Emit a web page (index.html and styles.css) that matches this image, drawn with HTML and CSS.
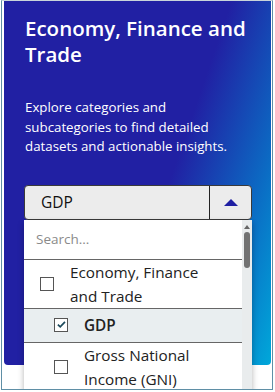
FILE: index.html
```html
<!DOCTYPE html>
<html>
<head>
<meta charset="utf-8">
<link rel="stylesheet" href="styles.css">
</head>
<body>
<div class="frame">
  <div class="card">
    <h1 class="title">Economy, Finance and Trade</h1>
    <p class="desc">Explore categories and subcategories to find detailed datasets and actionable insights.</p>
    <div class="select">
      <div class="select-box">
        <span class="select-value">GDP</span>
        <span class="select-toggle"><span class="tri"></span></span>
      </div>
      <div class="menu">
        <div class="menu-list">
          <div class="search">Search...</div>
          <div class="item">
            <span class="cb"></span>
            <span class="label">Economy, Finance and Trade</span>
          </div>
          <div class="item sub active">
            <span class="cb checked"><svg viewBox="0 0 13 13" width="11" height="11"><path d="M2.2 6.6 L5 9.3 L10.6 3.4" fill="none" stroke="#1b4a5c" stroke-width="2"/></svg></span>
            <span class="label bold">GDP</span>
          </div>
          <div class="item sub">
            <span class="cb"></span>
            <span class="label">Gross National Income (GNI)</span>
          </div>
        </div>
        <div class="scrollbar">
          <span class="sb-arrow"></span>
          <span class="sb-thumb"></span>
        </div>
      </div>
    </div>
  </div>
</div>
</body>
</html>
```
FILE: styles.css
```css
* { box-sizing: border-box; }
html, body { margin: 0; padding: 0; background: #fff; }
body { width: 275px; height: 392px; overflow: hidden; font-family: "Open Sans", "Lato", sans-serif; }
.frame {
  margin-left: 1px;
  width: 272px;
  height: 390px;
  border: 1px solid #5f8fa6;
  border-top-color: #c9d4da;
  padding: 0 1px 0 2px;
  overflow: hidden;
  position: relative;
}
.card {
  height: 364px;
  border-radius: 0 0 4px 4px;
  background: linear-gradient(109deg, #2120a3 0%, #2120a3 58%, #0b6cc4 82%, #00a8da 100%);
  padding: 14px 6px 0 21px;
  color: #fff;
}
.title {
  margin: 0;
  font-size: 20.5px;
  line-height: 26px;
  font-weight: 600;
  letter-spacing: 0;
}
.desc {
  margin: 31px 0 0;
  width: 212px;
  font-size: 13.3px;
  line-height: 19.5px;
  font-weight: 400;
}
.select {
  position: relative;
  margin: 28px 0 0 -1px;
  width: 228px;
}
.select-box {
  height: 35px;
  display: flex;
  align-items: stretch;
  background: #ececec;
  border: 1px solid #3a3a3a;
  border-radius: 4px;
  color: #111;
}
.select-value {
  flex: 1;
  display: flex;
  align-items: center;
  padding-left: 16px;
  font-size: 15.5px;
  border-right: 1px solid #222;
}
.select-toggle {
  width: 41px;
  display: flex;
  align-items: center;
  justify-content: center;
}
.tri {
  width: 0; height: 0;
  border-left: 7px solid transparent;
  border-right: 7px solid transparent;
  border-bottom: 7px solid #1f1fa2;
}
.menu {
  position: absolute;
  left: 0;
  top: 35px;
  width: 228px;
  height: 200px;
  display: flex;
  background: #fff;
  box-shadow: 0 3px 6px rgba(0,0,0,0.3);
  color: #222;
}
.menu-list { flex: 1; }
.search {
  height: 40px;
  display: flex;
  align-items: center;
  padding-left: 12px;
  font-size: 13.5px;
  color: #8a8a8a;
  border-bottom: 1px solid #666;
}
.item {
  display: flex;
  align-items: center;
  padding: 0 0 0 16px;
  border-bottom: 1px solid #666;
  font-size: 15.3px;
  line-height: 24px;
}
.item.sub { padding-left: 30px; }
.item.active { background: #e9eef0; padding-top: 4px; padding-bottom: 5px; }
.cb {
  flex: none;
  width: 14px; height: 14px;
  border: 1px solid #555;
  background: #fff;
  margin-right: 16px;
  display: flex;
  align-items: center;
  justify-content: center;
}
.label { width: 150px; }
.bold { font-weight: 600; }
.scrollbar {
  width: 10px;
  background: #e9eced;
  position: relative;
}
.sb-arrow {
  position: absolute;
  left: 2px; top: 5px;
  width: 0; height: 0;
  border-left: 3px solid transparent;
  border-right: 3px solid transparent;
  border-bottom: 4px solid #666;
}
.sb-thumb {
  position: absolute;
  left: 2px; top: 12px;
  width: 6px; height: 36px;
  background: #727272;
  border-radius: 3px;
}
```
